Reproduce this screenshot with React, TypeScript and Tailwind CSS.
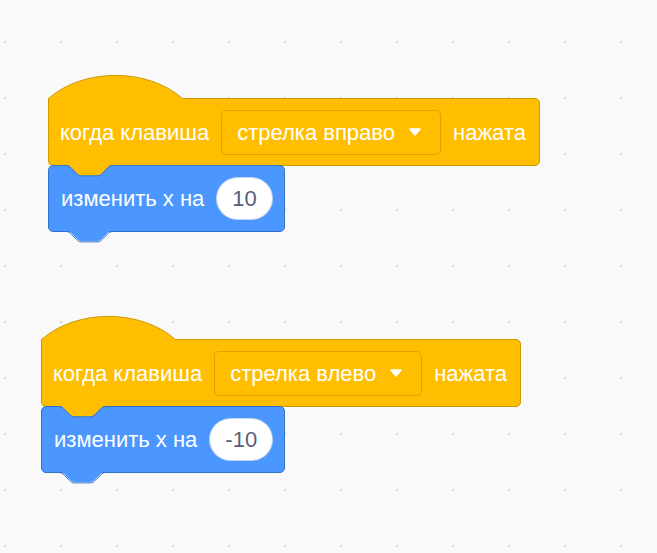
function HatTop() {
  // hat arc drawn over the left part of the event block's top edge
  return (
    <svg className="absolute -left-px -top-[25px] overflow-visible" width="137" height="28" viewBox="0 0 137 28">
      <path d="M0.5,28 V24.5 C35.5,-6.3 99.5,-6.3 134.5,24.5 V28 Z" fill="#ffbf00" />
      <path d="M0.5,28 V24.5 C35.5,-6.3 99.5,-6.3 134.5,24.5" fill="none" stroke="#cc9900" strokeWidth="1" />
    </svg>
  );
}

const tabPath =
  'M0,0 c2.6,0 3.9,1.3 5.2,2.6 l5.2,5.2 c1.3,1.3 2.6,2.6 5.2,2.6 h15.6 c2.6,0 3.9,-1.3 5.2,-2.6 l5.2,-5.2 c1.3,-1.3 2.6,-2.6 5.2,-2.6';

function Notch() {
  // the parent's tab showing through the notch on top of a stacked block
  return (
    <svg className="absolute -top-px left-[17px] overflow-visible" width="47" height="12" viewBox="0 0 47 12">
      <path d={tabPath + ' Z'} fill="#ffbf00" />
      <path d={tabPath} transform="translate(0 0.5)" fill="none" stroke="#3373cc" strokeWidth="1" />
    </svg>
  );
}

function BottomTab() {
  return (
    <svg className="absolute top-full left-[17px] overflow-visible" width="47" height="12" viewBox="0 0 47 12">
      <path d={tabPath + ' Z'} transform="translate(0 -0.5)" fill="#4c97ff" />
      <path d={tabPath} transform="translate(0 0.5)" fill="none" stroke="#3373cc" strokeWidth="1" />
    </svg>
  );
}

function Script({ className, keyName, value }: { className: string; keyName: string; value: string }) {
  return (
    <div className={`flex flex-col items-start ${className}`}>
      <div className="relative flex h-[68px] items-center gap-3 rounded-[5px] rounded-tl-none border border-[#cc9900] bg-[#ffbf00] pl-[11px] pr-[13px]">
        <HatTop />
        <span className="whitespace-nowrap">когда клавиша</span>
        <div className="flex h-[45px] items-center gap-[14px] rounded-[5px] border border-[#cc9900]/70 pl-[15px] pr-[19px]">
          <span className="whitespace-nowrap">{keyName}</span>
          <svg width="12" height="8" viewBox="0 0 12 8">
            <path d="M1,1 H11 L6,7 Z" fill="#fff" stroke="#fff" strokeWidth="1.5" strokeLinejoin="round" />
          </svg>
        </div>
        <span>нажата</span>
      </div>
      <div className="relative -mt-px flex h-[67px] items-center gap-3 rounded-[5px] border border-[#3373cc] bg-[#4c97ff] pl-3 pr-[11px]">
        <Notch />
        <span className="whitespace-nowrap">изменить x на</span>
        <div className="flex h-[43px] min-w-[56px] items-center justify-center rounded-full border border-[#3373cc]/30 bg-white px-[15px] text-[#575e75]">
          {value}
        </div>
        <BottomTab />
      </div>
    </div>
  );
}

export default function App() {
  return (
    <div className="h-[553px] w-[657px] overflow-hidden bg-[#f9f9f9] bg-[radial-gradient(circle,#d9d9d9_1px,transparent_1.6px)] bg-[length:56px_56px] bg-[position:-23px_14px] font-['Liberation_Sans',Arial,sans-serif] text-[22px] text-white">
      <div className="flex flex-col pt-[98px]">
        <Script className="ml-[48px]" keyName="стрелка вправо" value="10" />
        <Script className="ml-[41px] mt-[107px]" keyName="стрелка влево" value="-10" />
      </div>
    </div>
  );
}
